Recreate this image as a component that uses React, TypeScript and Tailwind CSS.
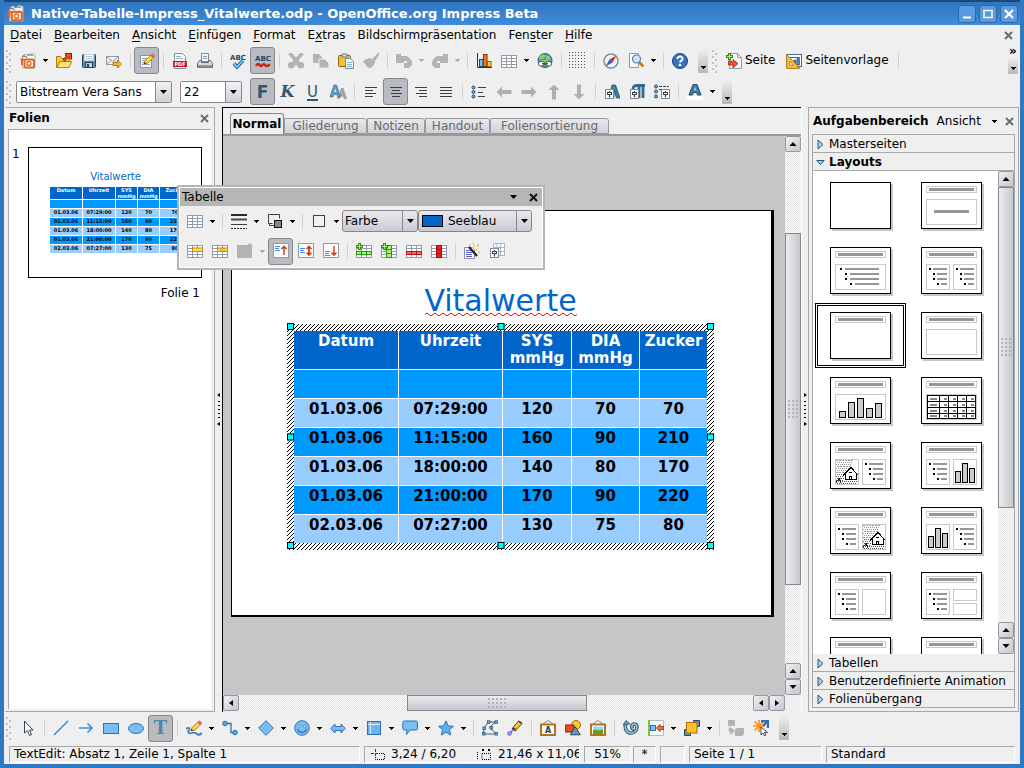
import React from "react";

type Kids = { children?: React.ReactNode };

/* ---------- small building blocks ---------- */

function Ico({ children, w = 16, h = 16 }: Kids & { w?: number; h?: number }) {
  return (
    <svg width={w} height={h} viewBox={`0 0 ${w} ${h}`} fill="none" className="shrink-0" aria-hidden="true">
      {children}
    </svg>
  );
}

function Tb({ label, on, children }: Kids & { label: string; on?: boolean }) {
  return (
    <button
      type="button"
      aria-label={label}
      title={label}
      aria-pressed={on ? true : undefined}
      className={
        on
          ? "flex h-[27px] w-[25px] shrink-0 items-center justify-center rounded-[3px] border border-[#85878d] bg-[#b9bbc1]"
          : "flex h-[27px] w-[25px] shrink-0 items-center justify-center"
      }
    >
      {children}
    </button>
  );
}

function Triangle({ off }: { off?: boolean }) {
  return (
    <svg width="5" height="3" viewBox="0 0 5 3" aria-hidden="true" shapeRendering="crispEdges">
      <path d="M0 0h5v1h-1v1h-1v1h-1v-1h-1v-1h-1z" fill={off ? "#aaa" : "#000"} />
    </svg>
  );
}

function ComboArrow() {
  return (
    <svg width="7" height="4" viewBox="0 0 7 4" aria-hidden="true">
      <path d="M0 0h7L3.500 4z" />
    </svg>
  );
}

function Drop({ label, off }: { label: string; off?: boolean }) {
  return (
    <button type="button" aria-label={label} className="flex h-[27px] w-[11px] shrink-0 items-center justify-center">
      <Triangle off={off} />
    </button>
  );
}

function Sep() {
  return (
    <span className="flex w-2 shrink-0 justify-center">
      <span className="h-[15px] w-px bg-[#cfcfcf]" />
    </span>
  );
}

function Grip() {
  return (
    <svg width="6" height="24" viewBox="0 0 6 24" className="shrink-0" aria-hidden="true" shapeRendering="crispEdges">
      {[0, 6, 12, 18].map((y) => (
        <g key={y} fill="#c2c2c2">
          <path d={`M0 ${y + 1}h2v2h-2zM3 ${y + 4}h2v2h-2z`} />
        </g>
      ))}
    </svg>
  );
}

function More() {
  return (
    <button
      type="button"
      aria-label="Weitere Symbole"
      className="flex h-6 w-[10px] shrink-0 items-end justify-center bg-linear-to-b from-[#efefef] to-[#b8b8b8] pb-1"
    >
      <Triangle />
    </button>
  );
}

function CloseX({ color = "#5f6f7f" }: { color?: string }) {
  return (
    <Ico w={9} h={9}>
      <path d="M1 1l7 7M8 1L1 8" stroke={color} strokeWidth="2" />
    </Ico>
  );
}

/* ---------- icons ---------- */

const Impress = ({ s = 16 }: { s?: number }) => (
  <svg width={s} height={s} viewBox="0 0 16 16" fill="none" className="shrink-0" aria-hidden="true">
    <path d="M2.500 3.500L5 1l3 1.500L11 .5l4 1v13.500H2.500z" fill="#f6f6f6" stroke="#b5b5b5" />
    <path d="M2 3.800c1.800-1.600 3.500-.6 5 .7M7.500 2.300c2-1.500 3.500 0 5.500.2" stroke="#7d7d7d" strokeWidth="1.300" />
    <path d="M.5 6.500h4M2 6v6" stroke="#e0672a" strokeWidth="2" />
    <rect x="4.500" y="6.500" width="9.500" height="8" rx="1.500" stroke="#e0672a" strokeWidth="2" />
    <circle cx="9" cy="10.500" r="2" fill="#fff" stroke="#e0672a" strokeWidth="1.300" />
  </svg>
);
const Open = () => (
  <Ico>
    <path d="M.5 14.500V3.500h4l1.500 2H13v9z" fill="#f6c73c" stroke="#b57a10" />
    <path d="M1 14.500l3-6h11.500l-2.500 6z" fill="#ffe27a" stroke="#b57a10" />
    <path d="M7.500 7.500l6-6M9 1.500h5.500v5" stroke="#8c1d04" strokeWidth="3" />
    <path d="M8 7l5-5M9.500 1.800h4.700v4.700" stroke="#f25a1d" strokeWidth="1.400" />
  </Ico>
);
const Save = () => (
  <Ico>
    <rect x="1.500" y="1.500" width="13" height="13" rx="1" fill="#5f91b8" stroke="#1d4463" />
    <rect x="3.500" y="1.500" width="9" height="6" fill="#f3f7fa" stroke="#c2d2de" />
    <path d="M5 3.500h6M5 5.500h6" stroke="#b6c3cd" />
    <rect x="4.500" y="9.500" width="7" height="5" fill="#c3d0da" stroke="#1d4463" />
    <rect x="6" y="11" width="2" height="3" fill="#1d4463" />
  </Ico>
);
const Mail = () => (
  <Ico>
    <rect x=".5" y="3.500" width="12" height="8" fill="#f1f4f8" stroke="#8f9aa6" />
    <path d="M1 4l5.500 4.500L12 4M1 11l4-3.500M12 11L8 7.500" stroke="#8f9aa6" />
    <path d="M7 9.500h4.500v-2.500l4 4-4 4v-2.500H7z" fill="#fbb829" stroke="#b06f08" strokeWidth=".9" />
  </Ico>
);
const Pencil = ({ x = 0, y = 0 }: { x?: number; y?: number }) => (
  <g transform={`translate(${x} ${y})`}>
    <path d="M0 10l1-3.500L7 1l2.500 2.300L4 9z" fill="#ffd940" stroke="#9c7410" strokeWidth=".8" />
    <path d="M6.500 1.500L8.500 0l2.300 2L9.500 3.700z" fill="#e8736c" stroke="#a6403b" strokeWidth=".6" />
    <path d="M0 10l.7-2 1.500 1.400z" fill="#222" />
  </g>
);
const Edit = () => (
  <Ico>
    <path d="M1.500 2.500h11v12h-11z" fill="#f7f9fc" stroke="#8493a5" />
    <path d="M3 5.500h6M3 7.500h5M3 9.500h3M3 11.500h8" stroke="#8fa6bd" />
    <Pencil x={5} y={1} />
  </Ico>
);
const Pdf = () => (
  <Ico>
    <path d="M2.500.5h8l3 3v12h-11z" fill="#f5f7fa" stroke="#7f8fa3" />
    <path d="M4 3.500h5M4 5.500h7" stroke="#9fb0c2" />
    <rect x="1" y="8" width="14" height="6" fill="#d6121c" />
    <text x="8" y="13" textAnchor="middle" fontSize="5" fontWeight="bold" fill="#fff" fontFamily="DejaVu Sans, sans-serif">
      PDF
    </text>
  </Ico>
);
const Print = () => (
  <Ico>
    <path d="M4.500.5h7v8h-7z" fill="#f8fafc" stroke="#7d8c9c" />
    <path d="M6 3.500h4M6 5.500h4" stroke="#8fa0b2" />
    <path d="M2.500 7.500h2v2h7v-2h2l2 3v4H.5v-4z" fill="#d5dae0" stroke="#5f6b77" />
    <path d="M1 12h14v2.500H1z" fill="#8a949e" />
    <path d="M12 12.500h2" stroke="#62d22f" />
  </Ico>
);
const Abc = () => (
  <text x="9" y="7" textAnchor="middle" fontSize="7" fontWeight="bold" fill="#24475f" fontFamily="DejaVu Sans, sans-serif">
    ABC
  </text>
);
const SpellCheck = () => (
  <Ico w={18} h={16}>
    <Abc />
    <path d="M5 10.500l3 3.500 6-6.500" stroke="#1d5f99" strokeWidth="3.500" />
    <path d="M5 10.500l3 3.500 6-6.500" stroke="#7fd0ff" strokeWidth="1.600" />
  </Ico>
);
const SpellAuto = () => (
  <Ico w={18} h={14}>
    <Abc />
    <path d="M2 12c2-4 3.500-1 4.500 0s2.500-3.500 4.500-1 3 .5 5-.5" stroke="#cf1f10" strokeWidth="2.400" />
  </Ico>
);
const Cut = () => (
  <Ico>
    <path d="M1.500 0l9 10M14.500 0l-9 10" stroke="#b3b3b3" strokeWidth="3.600" />
    <path d="M7 7h2l1.500 2h4l1.500 2v3l-2 1.500h-3L8 11.500 5 15.500H2L0 14v-3L1.500 9h4z" fill="#b3b3b3" />
  </Ico>
);
const Copy = () => (
  <Ico>
    <path d="M0 1h6l3 3v6H0z" fill="#b3b3b3" />
    <path d="M6 6h6l4 4v5H6z" fill="#b3b3b3" stroke="#eee" />
  </Ico>
);
const Paste = () => (
  <Ico>
    <rect x=".5" y="2.500" width="12" height="11" rx="1" fill="#eec03a" stroke="#8a6212" />
    <rect x="4" y="1" width="5" height="3" fill="#d9dde1" stroke="#667" strokeWidth=".8" />
    <path d="M7.500 5.500h5l3 3v7h-8z" fill="#f3f8fd" stroke="#6f8fae" />
    <path d="M9 9.500h5M9 11.500h5M9 13.500h5" stroke="#86b3de" />
  </Ico>
);
const Brush = () => (
  <Ico>
    <path d="M16 0v2l-4 6c0 4-3 7-6 7-2 0-2-2-4-4S0 8 0 8l6-3 3 1 6-6z" fill="#b3b3b3" />
  </Ico>
);
const Undo = () => (
  <Ico>
    <path d="M0 1h5v2h6l3 2.500 2 3V12l-3 3H8v-5h3V8H8v2H0z" fill="#b3b3b3" />
  </Ico>
);
const Redo = () => (
  <Ico>
    <path d="M16 1h-5v2H5L2 5.500 0 8.500V12l3 3h5v-5H5V8h3v2h8z" fill="#b3b3b3" />
  </Ico>
);
const Chart = () => (
  <Ico>
    <path d="M1.500 0v14.500H16" stroke="#333" />
    <rect x="3.500" y="6.500" width="3.500" height="7" fill="#7cc1f2" stroke="#204a74" />
    <rect x="7.500" y="1.500" width="3.500" height="12" fill="#f77a1c" stroke="#8a2c04" />
    <rect x="11.500" y="8.500" width="3.500" height="5" fill="#fbcf2c" stroke="#8a6a04" />
  </Ico>
);
const gridLines = "M0 2.500h16M0 5.500h16M0 8.500h16M0 11.500h16M0 14.500h16M.5 2v13M5.500 2v13M10.500 2v13M15.500 2v13";
const TableBase = ({ children }: Kids) => (
  <Ico>
    <rect x=".5" y="2.500" width="15" height="12" fill="#fff" />
    <path d={gridLines} stroke="#8e9dab" shapeRendering="crispEdges" />
    {children}
  </Ico>
);
const Globe = () => (
  <Ico>
    <circle cx="8" cy="7.500" r="7" fill="#4b95d6" stroke="#275a8c" />
    <path d="M2 4c2-3 5-3 6-2s-1 4-3 4-3 1-3-2zM9 3c2-1 4 0 5 3l-3 2-2-2zM4 7h7v3H5z" fill="#8fce5a" />
    <rect x="1.500" y="8.500" width="6" height="4.500" rx="2.200" fill="#fff" stroke="#4b5c35" />
    <rect x="8.500" y="8.500" width="6" height="4.500" rx="2.200" fill="#fff" stroke="#4b5c35" />
    <path d="M5 10.800h6" stroke="#4b5c35" strokeWidth="1.500" />
  </Ico>
);
const DotGrid = () => (
  <Ico w={17} h={17}>
    {[0, 1, 2, 3, 4, 5].map((r) => (
      <path key={r} d={`M0 ${r * 3 + 0.5}h17`} stroke="#555" strokeDasharray="1 2" shapeRendering="crispEdges" />
    ))}
  </Ico>
);
const Compass = () => (
  <Ico>
    <circle cx="8" cy="8" r="7" fill="#eef3f8" stroke="#7b8b9b" strokeWidth="1.400" />
    <path d="M13.500 2.500L9.500 9.500 6.500 6.500z" fill="#e0261c" />
    <path d="M2.500 13.500l4-7 3 3z" fill="#2763b8" />
  </Ico>
);
const Zoom = () => (
  <Ico>
    <path d="M1.500.5h9v14h-9z" fill="#f9fbfd" stroke="#8b9bab" />
    <path d="M11 9l4.500 4.500" stroke="#c17d12" strokeWidth="2.600" />
    <circle cx="8.500" cy="6" r="4" fill="#cfe6fa" stroke="#5a7ea3" strokeWidth="1.200" />
  </Ico>
);
const Help = () => (
  <Ico>
    <circle cx="8" cy="8" r="7.500" fill="#3a72c2" stroke="#173e7c" />
    <path d="M5.500 6c0-3.500 5.500-3.300 5 0-.2 1.500-2.400 1.500-2.400 3.500" stroke="#fff" strokeWidth="2" />
    <circle cx="8" cy="12" r="1.300" fill="#fff" />
  </Ico>
);
const NewPage = () => (
  <Ico>
    <path d="M3.500.5h8l4 4v11h-12z" fill="#f4f7fa" stroke="#8b9bab" />
    <path d="M11.500.5v4h4" stroke="#8b9bab" />
    <path d="M3.500 0v7M0 3.500h7" stroke="#2d8a14" strokeWidth="3" />
    <path d="M3.500 1v5M1 3.500h5" stroke="#b2f28a" />
    <path d="M2.500 8v4H7v3l5-4.500L7 6.500V9.500H5.500V8z" fill="#f4572a" stroke="#9c2806" strokeWidth=".8" />
  </Ico>
);
const PageLayout = () => (
  <Ico>
    <rect x="1.500" y="1.500" width="14" height="12" fill="#fff" stroke="#3e6ca0" />
    <path d="M3 4.500h11" stroke="#3e6ca0" />
    <path d="M8 7h2v5h-2zM11 5.500h2.500V12H11z" fill="#5b8fc8" stroke="#27496f" strokeWidth=".7" />
    <path d="M.7 1.500v13.800h13z" fill="#fcc643" stroke="#a66a08" />
    <path d="M3.700 8v4.300h4z" fill="#fff" stroke="#a66a08" strokeWidth=".8" />
  </Ico>
);
const Glyph = ({ children, cls }: { children: string; cls: string }) => <span className={cls}>{children}</span>;
const Shadowed = () => (
  <Ico w={18} h={16}>
    <path d="M8 15l4-11h2.500L18 15h-3l-1-2.500h-2.500l-1 2.500z" fill="#a3a3a3" />
    <path d="M1 13L5 1h2.500l4 12H8.700L8 10.500H4.700L4 13z" fill="#5b9bc9" stroke="#3a6e96" strokeWidth=".7" />
    <path d="M5.300 8h2L6.300 4.500z" fill="#efefef" />
  </Ico>
);
const lines: Record<string, string> = {
  left: "M2 3.500h12M2 6.500h8M2 9.500h11M2 12.500h8",
  center: "M2 3.500h12M4 6.500h8M3 9.500h11M4 12.500h8",
  right: "M2 3.500h12M6 6.500h8M3 9.500h11M6 12.500h8",
  justify: "M2 3.500h12M2 6.500h12M2 9.500h12M2 12.500h12",
};
const Align = ({ kind }: { kind: string }) => (
  <Ico>
    <path d={lines[kind]} stroke="#33404d" shapeRendering="crispEdges" />
  </Ico>
);
const Bullets = () => (
  <Ico w={15} h={14}>
    {[2.5, 7, 11.5].map((y) => (
      <circle key={y} cx="2.500" cy={y} r="1.500" fill="#6eaed8" stroke="#234d6d" />
    ))}
    <path d="M7 2.500h8M7 7.500h5M7 11.500h7" stroke="#33404d" shapeRendering="crispEdges" />
  </Ico>
);
const arrowTurn: Record<string, string> = { left: "rotate(0 8 8)", up: "rotate(90 8 8)", right: "rotate(180 8 8)", down: "rotate(270 8 8)" };
const GrayArrow = ({ to }: { to: string }) => (
  <Ico>
    <path d="M.5 8L6 2.500V6h9.500v4H6v3.500z" fill="#b0b0b0" transform={arrowTurn[to]} />
  </Ico>
);
const SlideBox = () => (
  <>
    <rect x="1.500" y="5.500" width="8" height="9" fill="#fff" stroke="#7c8a98" />
    <path d="M5.500 7v6.500" stroke="#33404d" strokeWidth="1.200" />
    <rect x="3.500" y="8.500" width="4" height="2" fill="#fff" stroke="#33404d" />
  </>
);
const CharStyle = () => (
  <Ico>
    <path d="M5 14l3-13h3.500L16 14h-3.500L10 6v8z" fill="#3f7ea6" stroke="#1d4a68" strokeWidth=".8" />
    <SlideBox />
  </Ico>
);
const ParaStyle = () => (
  <Ico>
    <path d="M4 5.500C4 1 7 1.500 9 1.500h7M10 2v12M14 2v12" stroke="#2f6a90" strokeWidth="2.800" />
    <SlideBox />
  </Ico>
);
const BulletStyle = () => (
  <Ico>
    {[2, 7, 12].map((y) => (
      <circle key={y} cx="2" cy={y + 0.5} r="1.500" fill="#6eaed8" stroke="#234d6d" />
    ))}
    <path d="M5 2.500h10M5 5.500h2" stroke="#33404d" strokeDasharray="3 1" />
    <g transform="translate(6 0)">
      <SlideBox />
    </g>
  </Ico>
);
const FontColor = () => (
  <Ico w={16} h={18}>
    <path d="M2 12L6 1.500h4L14 12h-3.500l-.8-2.500H6.300L5.500 12z" fill="#3f7ea6" stroke="#1d4a68" />
    <path d="M7.200 7.200h1.800L8.100 4z" fill="#efefef" />
    <rect x="0" y="13" width="16" height="4" fill="#fff" />
  </Ico>
);

/* drawing bar */
const Cursor = () => (
  <Ico>
    <path d="M4.500 1v12l3-2.500 2 5 2-1-2-4.500H13z" fill="#fff" stroke="#33404d" />
  </Ico>
);
const B = "#2f6fb5";
const L = "#79bdf5";
const LineI = () => (
  <Ico>
    <path d="M1 15L15 1" stroke="#3f8de0" strokeWidth="1.600" />
  </Ico>
);
const ArrowI = () => (
  <Ico>
    <path d="M1 8h13M9.500 3.500L14 8l-4.500 4.500" stroke="#3f8de0" strokeWidth="1.600" />
  </Ico>
);
const RectI = () => (
  <Ico>
    <rect x=".5" y="3.500" width="15" height="10" fill={L} stroke={B} />
  </Ico>
);
const EllipseI = () => (
  <Ico>
    <ellipse cx="8" cy="8.500" rx="7.500" ry="5" fill={L} stroke={B} />
  </Ico>
);
const Curve = () => (
  <Ico>
    <path d="M0 9c2-2 5-1 3 1s0 4 3 3 4 0 5 1 3 1 5-1" stroke="#3f7fc0" strokeWidth="1.800" />
    <Pencil x={5} y={1} />
  </Ico>
);
const Connector = () => (
  <Ico>
    <path d="M3 3.500h6v9h4" stroke={B} strokeWidth="1.300" />
    <circle cx="3" cy="3.500" r="2.300" fill="#5aa8ef" stroke={B} />
    <circle cx="13" cy="12.500" r="2.300" fill="#5aa8ef" stroke={B} />
  </Ico>
);
const Diamond = () => (
  <Ico>
    <path d="M8 .7L15.300 8 8 15.300.7 8z" fill={L} stroke={B} />
  </Ico>
);
const Smiley = () => (
  <Ico>
    <circle cx="8" cy="8" r="7.300" fill={L} stroke={B} />
    <circle cx="5.300" cy="6" r="1.200" fill="#fff" stroke={B} strokeWidth=".7" />
    <circle cx="10.700" cy="6" r="1.200" fill="#fff" stroke={B} strokeWidth=".7" />
    <path d="M3.500 9c1.500 4.500 7.500 4.500 9 0" stroke={B} strokeWidth="1.200" />
  </Ico>
);
const DoubleArrow = () => (
  <Ico>
    <path d="M.7 8.500L5 4v2.500h6V4l4.300 4.500L11 13v-2.500H5V13z" fill={L} stroke={B} />
  </Ico>
);
const Flow = () => (
  <Ico>
    <rect x="1.500" y="1.500" width="13" height="13" fill="#6fb3ef" stroke={B} />
    <path d="M4.500 2v12M2 4.500h12" stroke="#e6f3ff" />
  </Ico>
);
const Callout = () => (
  <Ico>
    <path d="M2.500 1h11.500q1.500 0 1.500 1.500v6q0 1.500-1.500 1.500H8l-3.500 4.500L5 10H2.500Q.8 10 .8 8.500v-6Q.8 1 2.500 1z" fill={L} stroke={B} />
  </Ico>
);
const Star = () => (
  <Ico>
    <path d="M8 .9l2.200 5 5.200.4-4 3.500 1.400 5.200L8 12.200 3.200 15l1.400-5.200-4-3.500 5.200-.4z" fill="#5fb0f2" stroke={B} />
  </Ico>
);
const Points = () => (
  <Ico>
    <path d="M1.500 14h13L7.500 7.500l6-5.500h-7L2 8z" stroke="#4a5966" />
    {[[0.5, 12.5], [13, 12.5], [5.500, 0.8], [13, 0.8], [1, 7], [8, 6.5]].map(([x, y]) => (
      <rect key={`${x}-${y}`} x={x} y={y} width="2.500" height="2.500" fill="#6fb3ef" stroke="#1e5a85" strokeWidth=".8" />
    ))}
  </Ico>
);
const Glue = () => (
  <Ico>
    <path d="M2.500 13.500L8 8" stroke="#5a5fc9" strokeWidth="1.300" />
    <path d="M6 7.500L11.500 1l3.500 2.500-5.500 6z" fill="#fbc22c" stroke="#4a3a10" strokeWidth=".9" />
    <path d="M5 8l4 3M11.500 1l3.500 2.500" stroke="#333" strokeWidth="1.500" />
    <circle cx="2.500" cy="13.500" r="1.700" fill="#b6b8ff" stroke="#4646c9" />
  </Ico>
);
const Frame = ({ children }: Kids) => (
  <Ico>
    <path d="M3 4l5-3.500L13 4" stroke="#8a8a8a" />
    <rect x="1" y="4.500" width="14" height="10.500" fill="#fff" stroke="#b87414" strokeWidth="2" />
    {children}
  </Ico>
);
const Shapes = () => (
  <Ico>
    <circle cx="11" cy="5" r="4.500" fill="#fbc530" stroke="#a66a08" />
    <rect x=".7" y="5" width="8" height="7" fill="#f0481f" stroke="#8c1d04" />
    <path d="M10 6.500l5.300 8.300H5.300z" fill="#6d93b4" stroke="#24475f" />
  </Ico>
);
const Rotate = () => (
  <Ico>
    <path d="M3 3C1 9 4 13 8 13s6-3 6-6-4-4-5-1 2 3 2 3" stroke="#2c5673" strokeWidth="3.600" />
    <path d="M3 3C1 9 4 13 8 13s6-3 6-6-4-4-5-1 2 3 2 3" stroke="#9cc3dc" strokeWidth="1.600" />
    <path d="M0 5l3-4.500L7 4z" fill="#6b9cbd" stroke="#2c5673" strokeWidth=".8" />
  </Ico>
);
const AlignObj = () => (
  <Ico>
    <path d="M1.500.5h14v15h-14z" fill="#f7f9fb" stroke="#b3bcc6" />
    <path d="M1 0v16" stroke="#5bb51c" strokeWidth="1.500" />
    <rect x="2.500" y="5.500" width="5" height="5" fill="#7cc1f2" stroke="#2f6fb5" />
    <path d="M8.500 8L12 4.500v2h4v3h-4v2z" fill="#f4732a" stroke="#8c2404" strokeWidth=".8" />
  </Ico>
);
const Arrange = () => (
  <Ico>
    <path d="M9.500.5h6v6h-6z" fill="#6d93b4" stroke="#24475f" />
    <path d="M.5 9.500h6v6h-6z" fill="#6d93b4" stroke="#24475f" />
    <rect x="2.500" y="2.500" width="10.500" height="10.500" fill="#fcc22c" stroke="#a66a08" />
  </Ico>
);
const Replace = () => (
  <Ico>
    <path d="M0 0h7v6H0zM7 10l1.500-2H16v6l-2 2H7z" fill="#b3b3b3" />
    <path d="M1.500 7.500v3.500h2M3 8.500l3 2.500-3 2.500z" stroke="#b3b3b3" strokeWidth="1.500" fill="#b3b3b3" />
  </Ico>
);
const Interact = () => (
  <Ico>
    <path d="M6 0v12M0 6h12M1.500 1.500l9 9M10.500 1.500l-9 9" stroke="#f7941d" strokeWidth="1.700" />
    <path d="M8 1h7v7M15 1L10 6" stroke="#2f6fb5" strokeWidth="2.400" />
    <path d="M8 7v8l2-2 1.500 3 1.500-1-1.500-2.500h3z" fill="#fff" stroke="#222" strokeWidth=".8" />
  </Ico>
);

/* table bar */
const LineStyle = () => (
  <Ico>
    <path d="M0 2h16" stroke="#232b33" strokeWidth="2" />
    <path d="M0 6.500h16" stroke="#3f4d5b" strokeWidth="2" />
    <path d="M0 11.500h16" stroke="#33404d" />
    <path d="M0 15.500h16" stroke="#222" strokeDasharray="2 1" />
  </Ico>
);
const LineColor = () => (
  <Ico>
    <path d="M5.500 10.500h-4v-9h11v4" stroke="#33404d" />
    <path d="M2.500 10.500v2h5" stroke="#33404d" />
    <rect x="7.500" y="7.500" width="7" height="7" fill="#888" stroke="#111" />
  </Ico>
);
const BorderBox = () => (
  <Ico>
    <rect x="2.500" y="2.500" width="11" height="11" fill="#f0f3f6" stroke="#33404d" />
  </Ico>
);
const MergeGray = () => (
  <Ico>
    <path d="M0 2h10l3-2 2 2v13H0z" fill="#b3b3b3" />
  </Ico>
);
const VAlign = ({ kind }: { kind: string }) => (
  <Ico>
    <rect x=".5" y=".5" width="15" height="14" fill="#fff" stroke="#8e9dab" />
    {kind === "top" && <path d="M2 3.500h5M2 5.500h4M2 7.500h5" stroke="#3f8de0" />}
    {kind === "mid" && <path d="M2 5.500h5M2 7.500h4M2 9.500h5" stroke="#3f8de0" />}
    {kind === "bot" && <path d="M2 8.500h5M2 10.500h4M2 12.500h5" stroke="#3f8de0" />}
    {kind !== "bot" && <path d="M11 12V3.500M8.500 6L11 3.200 13.500 6" stroke="#d93416" strokeWidth="1.400" />}
    {kind !== "top" && <path d="M11 3v9M8.500 9.500L11 12.300l2.500-2.800" stroke="#d93416" strokeWidth="1.400" />}
  </Ico>
);
const GreenPlus = () => (
  <>
    <path d="M3.500 0v7M0 3.500h7" stroke="#2f8f10" strokeWidth="3" />
    <path d="M3.500 1v5M1 3.500h5" stroke="#a8f07a" />
  </>
);
const Wizard = () => (
  <Ico>
    <path d="M.5 4.500h8l2 2v9H.5z" fill="#f7f7ff" stroke="#8e8eb5" />
    <path d="M2 7.500h6M2 9.500h6M2 11.500h6M2 13.500h6" stroke="#5b5bc9" />
    <path d="M5 4l8 9" stroke="#222" strokeWidth="2.200" />
    <path d="M5 1.500h1M9 .5h1M13 2.500h2M12 6.500h1M10 3.500h1M14.500 9.500h1" stroke="#e8a410" strokeWidth="1.700" />
  </Ico>
);
const TableProps = () => (
  <Ico>
    <path d="M4.500.5h11v12h-11zM4.500 4.500h11M4.500 8.500h11M8 .5v12M11.500.5v12" stroke="#a7b3bf" fill="#fff" />
    <SlideBox />
  </Ico>
);

/* ---------- scroll bars ---------- */

const arrowD: Record<string, string> = {
  up: "M4 1L7.500 5H.5z",
  down: "M4 5L.5 1h7z",
  left: "M2 3L6 0v6z",
  right: "M6 3L2 0v6z",
};
function ScrollBtn({ to }: { to: string }) {
  return (
    <button
      type="button"
      aria-label={`Bildlauf ${to}`}
      className="flex size-4 shrink-0 items-center justify-center rounded-[2px] border border-[#96989e] bg-linear-to-br from-[#f1f1f5] to-[#c4c6cd]"
    >
      <svg width="8" height="6" viewBox="0 0 8 6" aria-hidden="true">
        <path d={arrowD[to]} fill="#000" />
      </svg>
    </button>
  );
}
function ThumbDots({ vertical }: { vertical?: boolean }) {
  const w = vertical ? 10 : 18;
  const h = vertical ? 18 : 10;
  return (
    <svg width={w} height={h} viewBox={`0 0 ${w} ${h}`} aria-hidden="true" shapeRendering="crispEdges">
      {Array.from({ length: Math.ceil(h / 4) }, (_, i) => (
        <path key={i} d={`M0 ${i * 4 + 1}h${w}`} stroke="#b1b3b9" strokeWidth="2" strokeDasharray="2 2" />
      ))}
    </svg>
  );
}
const track = "bg-[conic-gradient(#e6e6e6_25%,#fafafa_0_50%,#e6e6e6_0_75%,#fafafa_0)] bg-[length:2px_2px]";

/* ---------- slide table ---------- */

const head = ["Datum", "Uhrzeit", "SYS mmHg", "DIA mmHg", "Zucker"];
const rows = [
  ["", "", "", "", ""],
  ["01.03.06", "07:29:00", "120", "70", "70"],
  ["01.03.06", "11:15:00", "160", "90", "210"],
  ["01.03.06", "18:00:00", "140", "80", "170"],
  ["01.03.06", "21:00:00", "170", "90", "220"],
  ["02.03.06", "07:27:00", "130", "75", "80"],
];

function SlideTable() {
  return (
    <table className="w-full table-fixed border-separate border-spacing-0 text-[15px] leading-[17px] font-bold">
      <colgroup>
        <col className="w-[105px]" />
        <col className="w-[104px]" />
        <col className="w-[69px]" />
        <col className="w-[68px]" />
        <col className="w-[67px]" />
      </colgroup>
      <thead>
        <tr className="h-[39px] bg-[#0066cc] text-white">
          {head.map((h) => (
            <th key={h} className="border-r border-b border-white p-0 pt-[2px] align-top last:border-r-0">
              {h}
            </th>
          ))}
        </tr>
      </thead>
      <tbody className="[&>tr:last-child]:h-7 [&>tr:last-child>td]:border-b-0">
        {rows.map((r, i) => (
          <tr key={i} className={i % 2 === 0 ? "h-[29px] bg-[#0099ff]" : "h-[29px] bg-[#99ccff]"}>
            {r.map((c, j) => (
              <td key={j} className="border-r border-b border-white p-0 pt-[2px] text-center align-top last:border-r-0">
                {c}
              </td>
            ))}
          </tr>
        ))}
      </tbody>
    </table>
  );
}

function MiniTable() {
  return (
    <table className="w-[141px] table-fixed border-separate border-spacing-0 text-[5px] leading-[6px] font-bold">
      <colgroup>
        <col className="w-[33px]" />
        <col className="w-[33px]" />
        <col className="w-[22px]" />
        <col className="w-[22px]" />
        <col />
      </colgroup>
      <thead>
        <tr className="h-[13px] bg-[#0066cc] text-white">
          {head.map((h) => (
            <th key={h} className="border-r border-b border-white p-0 align-top">
              {h}
            </th>
          ))}
        </tr>
      </thead>
      <tbody>
        {rows.map((r, i) => (
          <tr key={i} className={i % 2 === 0 ? "h-[9px] bg-[#0099ff]" : "h-[9px] bg-[#99ccff]"}>
            {r.map((c, j) => (
              <td key={j} className="overflow-hidden border-r border-b border-white p-0 text-center align-top">
                {c}
              </td>
            ))}
          </tr>
        ))}
      </tbody>
    </table>
  );
}

/* ---------- layout previews ---------- */

const Box = ({ x, y = 17, w, h = 26 }: { x: number; y?: number; w: number; h?: number }) => (
  <rect x={x + 0.5} y={y + 0.5} width={w - 1} height={h - 1} stroke="#c9c9c9" />
);
const List = ({ x, wide }: { x: number; wide?: boolean }) => {
  const step = wide ? 5 : 4;
  const end = wide ? 44 : 21;
  const first = wide ? 5 : 3;
  return (
    <g>
      {[0, 1, 1, 2].map((n, i) => {
        const dx = x + first + n * step;
        const y = 21 + i * 5;
        const bx = dx + (wide ? 5 : 4);
        return (
          <g key={i}>
            <rect x={dx} y={y} width="2" height="2" fill="#000" />
            <rect x={bx} y={y} width={x + end - bx} height="2" fill="#969696" />
          </g>
        );
      })}
    </g>
  );
};
const Bars = ({ x, w, gap, tops, base }: { x: number; w: number; gap: number; tops: number[]; base: number }) => (
  <g>
    {tops.map((t, i) => (
      <rect key={i} x={x + i * gap + 0.5} y={t + 0.5} width={w} height={base - t - 1} fill="#ccc" stroke="#000" />
    ))}
  </g>
);
const House = ({ x }: { x: number }) => (
  <g transform={`translate(${x} 17)`}>
    {Array.from({ length: 11 }, (_, i) => (
      <path
        key={i}
        d={`M${1 + (i % 2)} ${i * 2 + 1.5}h${Math.max(5, 17 - i)}`}
        stroke={i > 6 ? "#666" : "#999"}
        strokeDasharray={i % 3 ? "1 1" : "2 1"}
      />
    ))}
    <path d="M1 22.500h22M2 24.500h20" stroke="#555" strokeDasharray="1 1" />
    <path d="M9 15l7-6 6 6v6H9z" fill="#fff" />
    <path d="M8 16.500l8-8 7.500 8M10.500 15v5.500h11V15" stroke="#000" />
    <path d="M14.500 21v-4h2v4M14 13.500h3" stroke="#000" />
    <path d="M1 24l3-5 2 5" stroke="#222" />
  </g>
);
const Cells = () => (
  <g>
    <path d="M6.500 18.500h48v23h-48zM6 24.500h49M6 30.500h49M6 36.500h49M18.500 18v24M27.500 18v24M36.500 18v24M45.500 18v24" stroke="#000" />
    {[22, 28, 34, 39].map((y) => (
      <path key={y} d={`M9 ${y}h7M23 ${y}h3M32 ${y}h3M41 ${y}h3M50 ${y}h3`} stroke="#888" strokeWidth="2" />
    ))}
  </g>
);
const previews: { name: string; body: React.ReactNode }[] = [
  { name: "Leere Folie", body: null },
  {
    name: "Titelfolie",
    body: (
      <>
        <Box x={5} w={51} />
        <rect x="13" y="28" width="35" height="3" fill="#969696" />
      </>
    ),
  },
  { name: "Titel, Text", body: <><Box x={5} w={51} /><List x={5} wide /></> },
  { name: "Titel, zwei Texte", body: <><Box x={5} w={24} /><List x={5} /><Box x={32} w={24} /><List x={32} /></> },
  { name: "Nur Titel", body: null },
  { name: "Titel, Objekt", body: <Box x={5} w={51} /> },
  { name: "Titel, Diagramm", body: <><Box x={5} w={51} /><Bars x={9} w={6} gap={9} tops={[34, 25, 21, 31, 26]} base={41} /></> },
  { name: "Titel, Tabelle", body: <><Box x={5} w={51} /><Cells /></> },
  { name: "Titel, Clip, Text", body: <><House x={5} /><Box x={5} w={24} /><Box x={32} w={24} /><List x={32} /></> },
  { name: "Titel, Text, Diagramm", body: <><Box x={5} w={24} /><List x={5} /><Box x={32} w={24} /><Bars x={34} w={5} gap={7} tops={[29, 21, 26]} base={41} /></> },
  { name: "Titel, Text, Clip", body: <><Box x={5} w={24} /><List x={5} /><House x={32} /><Box x={32} w={24} /></> },
  { name: "Titel, Diagramm, Text", body: <><Box x={5} w={24} /><Bars x={7} w={5} gap={7} tops={[29, 21, 26]} base={41} /><Box x={32} w={24} /><List x={32} /></> },
  { name: "Titel, Text, Objekt", body: <><Box x={5} w={24} /><List x={5} /><Box x={32} w={24} /></> },
  { name: "Titel, Text, zwei Objekte", body: <><Box x={5} w={24} /><List x={5} /><Box x={32} w={24} h={12} /><Box x={32} y={31} w={24} h={12} /></> },
  { name: "Titel, zwei Objekte", body: null },
  { name: "Titel, vier Objekte", body: null },
];

function Preview({ index }: { index: number }) {
  const p = previews[index];
  const selected = index === 4;
  return (
    <button
      type="button"
      aria-label={p.name}
      className={
        selected
          ? "flex h-[65px] w-[91px] items-center justify-center border-3 border-double border-black"
          : "flex h-[65px] w-[91px] items-center justify-center"
      }
    >
      <svg width="61" height="47" viewBox="0 0 61 47" fill="none" className="overflow-visible" shapeRendering="crispEdges" aria-hidden="true">
        <rect x="2" y="2" width="61" height="47" fill="#c6c6c6" />
        <rect x=".5" y=".5" width="60" height="46" fill="#fff" stroke="#000" />
        {index > 0 && (
          <>
            <Box x={5} y={4} w={51} h={7} />
            <rect x="8" y="6" width="45" height="3" fill="#969696" />
          </>
        )}
        {p.body}
      </svg>
    </button>
  );
}

function Section({ open, children }: { open?: boolean; children: string }) {
  return (
    <button
      type="button"
      aria-expanded={!!open}
      className={
        open
          ? "flex h-[18px] w-full shrink-0 items-center gap-1 border-b border-[#a8a8a8] bg-[#efefef] pt-px pl-[3px] font-bold"
          : "flex h-[18px] w-full shrink-0 items-center gap-1 border-b border-[#a8a8a8] bg-[#efefef] pt-px pl-[3px]"
      }
    >
      <Ico w={9} h={9}>
        <path d={open ? "M.8 2.500h7.400L4.500 6.500z" : "M2 0l5 4.500L2 9z"} fill="#a5d0f0" stroke="#2b5575" />
      </Ico>
      {children}
    </button>
  );
}

/* ---------- window parts ---------- */

const menu: [string, string, string][] = [
  ["", "D", "atei"],
  ["", "B", "earbeiten"],
  ["", "A", "nsicht"],
  ["", "E", "infügen"],
  ["", "F", "ormat"],
  ["E", "x", "tras"],
  ["Bildschirm", "p", "räsentation"],
  ["Fen", "s", "ter"],
  ["", "H", "ilfe"],
];

function WinBtn({ label, children }: Kids & { label: string }) {
  return (
    <button type="button" aria-label={label} className="flex size-[18px] items-center justify-center rounded-[3px] border border-[#2a66a8] bg-[#5b9ade]">
      <Ico w={12} h={12}>{children}</Ico>
    </button>
  );
}

function ComboInput({ label, value, cls }: { label: string; value: string; cls: string }) {
  return (
    <div className={cls}>
      <input aria-label={label} defaultValue={value} className="h-full min-w-0 flex-1 bg-white pl-[3px] text-[12px] outline-none" />
      <button
        type="button"
        aria-label={`${label} auswählen`}
        className="flex h-full w-4 items-center justify-center border-l border-[#85878d] bg-linear-to-b from-[#f2f2f5] to-[#cfd1d7]"
      >
        <ComboArrow />
      </button>
    </div>
  );
}

function StatusCell({ cls, children }: Kids & { cls: string }) {
  return (
    <div className={`flex h-[17px] items-center overflow-hidden border border-t-[#a8a8a8] border-r-white border-b-white border-l-[#a8a8a8] pt-px whitespace-nowrap ${cls}`}>
      {children}
    </div>
  );
}

function Handle({ cls }: { cls: string }) {
  return <span className={`absolute size-[7px] border border-black bg-[#00ffff] ${cls}`} />;
}

function TableBar() {
  return (
    <div className="absolute top-[185px] left-[173px] w-[368px] border-2 border-[#b4b4b4] bg-[#efefef] p-px pb-[2px] shadow-[inset_0_0_0_1px_#fff]">
      <div className="flex h-[18px] items-center bg-[#b6b6b6] pr-1 pl-[2px]">
        <span className="flex-1">Tabelle</span>
        <button type="button" aria-label="Menü" className="mr-3"><ComboArrow /></button>
        <button type="button" aria-label="Schließen"><CloseX color="#111" /></button>
      </div>
      <div className="flex h-[30px] items-center pl-[2px]">
        <Tb label="Tabelle"><TableBase /></Tb><Drop label="Tabelle" /><Sep />
        <Tb label="Linienstil"><LineStyle /></Tb><Drop label="Linienstil" />
        <Tb label="Rahmenfarbe"><LineColor /></Tb><Drop label="Rahmenfarbe" /><Sep />
        <Tb label="Umrandung"><BorderBox /></Tb><Drop label="Umrandung" />
        <label className="flex h-[22px] w-[76px] items-center rounded-[3px] border border-[#85878d] bg-linear-to-b from-[#e9e9ee] to-[#c9cbd2]">
          <select aria-label="Füllart" className="h-full min-w-0 flex-1 appearance-none bg-transparent pl-[2px] outline-none">
            <option>Farbe</option>
          </select>
          <span className="flex h-full w-[15px] items-center justify-center border-l border-[#85878d]"><ComboArrow /></span>
        </label>
        <label className="flex h-[22px] w-[114px] items-center rounded-[3px] border border-[#85878d] bg-linear-to-b from-[#e9e9ee] to-[#c9cbd2] pl-[3px]">
          <span className="h-3 w-[21px] border border-black bg-[#0066cc]" />
          <select aria-label="Füllfarbe" className="h-full min-w-0 flex-1 appearance-none bg-transparent pl-[5px] outline-none">
            <option>Seeblau</option>
          </select>
          <span className="flex h-full w-[15px] items-center justify-center border-l border-[#85878d]"><ComboArrow /></span>
        </label>
      </div>
      <div className="flex h-[30px] items-center pl-[2px]">
        <Tb label="Zellen verbinden"><TableBase><rect x="5.500" y="5" width="10" height="3.500" fill="#ffe14a" stroke="#d98208" /></TableBase></Tb>
        <Tb label="Zellen teilen"><TableBase><path d="M5.500 5h10v3.500h-10zM9 5v3.500M12 5v3.500" fill="#ffe14a" stroke="#d98208" /></TableBase></Tb>
        <Tb label="Optimieren"><MergeGray /></Tb><Drop label="Optimieren" off />
        <Tb label="Oben" on><VAlign kind="top" /></Tb>
        <Tb label="Zentrieren (vertikal)"><VAlign kind="mid" /></Tb>
        <Tb label="Unten"><VAlign kind="bot" /></Tb><Sep />
        <Tb label="Zeile einfügen"><TableBase><path d="M.5 8.500h15v3H.5zM5.500 8v4M10.500 8v4" fill="#a8f07a" stroke="#1f9a0c" /><GreenPlus /></TableBase></Tb>
        <Tb label="Spalte einfügen"><TableBase><path d="M5.500 2.500h5v12h-5zM5 6.500h6M5 10.500h6" fill="#a8f07a" stroke="#1f9a0c" /><GreenPlus /></TableBase></Tb>
        <Tb label="Zeile löschen"><TableBase><path d="M.5 8.500h15v3H.5zM5.500 8v4M10.500 8v4" fill="#f26a6a" stroke="#b80f0f" /></TableBase></Tb>
        <Tb label="Spalte löschen"><TableBase><path d="M5.500 2.500h5v12h-5zM5 6.500h6M5 10.500h6" fill="#e32222" stroke="#a80808" /></TableBase></Tb><Sep />
        <Tb label="AutoFormat"><Wizard /></Tb>
        <Tb label="Tabelleneigenschaften"><TableProps /></Tb>
      </div>
    </div>
  );
}

const drawTools: [string, React.ReactNode][] = [
  ["Kurve", <Curve />],
  ["Verbinder", <Connector />],
  ["Standardformen", <Diamond />],
  ["Symbolformen", <Smiley />],
  ["Blockpfeile", <DoubleArrow />],
  ["Flussdiagramme", <Flow />],
  ["Legenden", <Callout />],
  ["Sterne", <Star />],
];

export default function App() {
  return (
    <div className="relative flex h-screen w-full flex-col overflow-hidden border-x-4 border-b-4 border-[#2f79c4] bg-[#efefef] font-['DejaVu_Sans',sans-serif] text-[12px] leading-[15px] text-black">
      {/* title bar */}
      <header className="-mx-1 flex h-[25px] shrink-0 items-center border-t-2 border-[#1c4878] bg-linear-to-b from-[#2f74bd] to-[#3f8cdb] pr-[6px] pl-[7px] text-white">
        <Impress s={17} />
        <h1 className="ml-[7px] flex-1 truncate text-[13px] font-bold">Native-Tabelle-Impress_Vitalwerte.odp - OpenOffice.org Impress Beta</h1>
        <div className="flex gap-[3px]">
          <WinBtn label="Minimieren"><path d="M2 9.500h8" stroke="#fff" strokeWidth="2" /></WinBtn>
          <WinBtn label="Maximieren"><rect x="2" y="2.500" width="8" height="7" stroke="#fff" strokeWidth="1.500" /></WinBtn>
          <WinBtn label="Schließen"><path d="M2 2l8 8M10 2l-8 8" stroke="#fff" strokeWidth="2.200" /></WinBtn>
        </div>
      </header>

      {/* menu bar */}
      <nav className="flex h-5 shrink-0 items-center gap-3 pr-[7px] pl-[6px]">
        {menu.map(([a, k, b]) => (
          <button type="button" key={a + k + b}>
            {a}
            <u className="underline-offset-2">{k}</u>
            {b}
          </button>
        ))}
        <button type="button" aria-label="Dokument schließen" className="ml-auto"><CloseX /></button>
      </nav>

      {/* standard bar */}
      <div className="flex h-[31px] shrink-0 items-center px-[2px]">
        <Grip />
        <span className="w-[3px]" />
        <Tb label="Neu"><Impress /></Tb><Drop label="Neu" />
        <Tb label="Öffnen"><Open /></Tb>
        <Tb label="Speichern"><Save /></Tb>
        <Tb label="E-Mail"><Mail /></Tb><Sep />
        <Tb label="Bearbeiten" on><Edit /></Tb><Sep />
        <Tb label="PDF-Export"><Pdf /></Tb>
        <Tb label="Drucken"><Print /></Tb><Sep />
        <Tb label="Rechtschreibung"><SpellCheck /></Tb>
        <Tb label="Automatische Rechtschreibprüfung" on><SpellAuto /></Tb><Sep />
        <Tb label="Ausschneiden"><Cut /></Tb>
        <Tb label="Kopieren"><Copy /></Tb>
        <Tb label="Einfügen"><Paste /></Tb>
        <Tb label="Format übertragen"><Brush /></Tb><Sep />
        <Tb label="Rückgängig"><Undo /></Tb><Drop label="Rückgängig" off />
        <Tb label="Wiederherstellen"><Redo /></Tb><Drop label="Wiederherstellen" off /><Sep />
        <Tb label="Diagramm"><Chart /></Tb>
        <Tb label="Tabelle"><TableBase /></Tb><Drop label="Tabelle" />
        <Tb label="Hyperlink"><Globe /></Tb><Sep />
        <Tb label="Raster"><DotGrid /></Tb><Sep />
        <Tb label="Navigator"><Compass /></Tb>
        <Tb label="Maßstab"><Zoom /></Tb><Drop label="Maßstab" /><Sep />
        <Tb label="Hilfe"><Help /></Tb>
        <span className="w-[6px]" />
        <More />
        <span className="w-1" />
        <Grip />
        <span className="w-2" />
        <button type="button" className="mr-[11px] flex items-center gap-[3px]"><NewPage />Seite</button>
        <button type="button" className="mr-[6px] flex items-center gap-[3px]"><PageLayout />Seitenvorlage</button>
        <Sep />
        <div className="ml-auto flex flex-col items-center gap-[2px]">
          <span className="h-2 text-[12px] leading-[8px] font-bold">»</span>
          <button type="button" aria-label="Weitere" className="flex h-[17px] w-[10px] items-end justify-center bg-linear-to-b from-[#efefef] to-[#b8b8b8] pb-1"><Triangle /></button>
        </div>
      </div>

      {/* format bar */}
      <div className="flex h-[31px] shrink-0 items-center pl-[2px]">
        <Grip />
        <ComboInput label="Schriftart" value="Bitstream Vera Sans" cls="ml-1 flex h-[22px] w-[156px] items-center overflow-hidden rounded-[2px] border border-[#85878d]" />
        <ComboInput label="Schriftgröße" value="22" cls="mr-2 ml-2 flex h-[22px] w-[62px] items-center overflow-hidden rounded-[2px] border border-[#85878d]" />
        <Tb label="Fett" on><Glyph cls="text-[17px] leading-5 font-bold text-[#34566f]">F</Glyph></Tb>
        <Tb label="Kursiv"><Glyph cls="font-['DejaVu_Serif',serif] text-[16px] leading-5 font-bold text-[#34566f] italic">K</Glyph></Tb>
        <Tb label="Unterstrichen"><Glyph cls="text-[15px] leading-5 text-[#34566f] underline decoration-2 underline-offset-2">U</Glyph></Tb>
        <Tb label="Schatten"><Shadowed /></Tb><Sep />
        <Tb label="Linksbündig"><Align kind="left" /></Tb>
        <Tb label="Zentriert" on><Align kind="center" /></Tb>
        <Tb label="Rechtsbündig"><Align kind="right" /></Tb>
        <Tb label="Blocksatz"><Align kind="justify" /></Tb><Sep />
        <Tb label="Aufzählung"><Bullets /></Tb>
        <Tb label="Höherstufen"><GrayArrow to="left" /></Tb>
        <Tb label="Herabstufen"><GrayArrow to="right" /></Tb>
        <Tb label="Nach oben"><GrayArrow to="up" /></Tb>
        <Tb label="Nach unten"><GrayArrow to="down" /></Tb><Sep />
        <Tb label="Zeichen"><CharStyle /></Tb>
        <Tb label="Absatz"><ParaStyle /></Tb>
        <Tb label="Nummerierung"><BulletStyle /></Tb><Sep />
        <Tb label="Schriftfarbe"><FontColor /></Tb><Drop label="Schriftfarbe" />
        <span className="w-1" />
        <More />
      </div>

      {/* work area */}
      <main className="flex min-h-0 flex-1 px-px">
        <aside className="flex w-[210px] shrink-0 flex-col border-y border-r border-[#a8a8a8] pr-[3px] pb-[2px] pl-[3px]">
          <div className="flex h-[21px] shrink-0 items-center justify-between pr-[2px] pl-px">
            <h2 className="font-bold">Folien</h2>
            <button type="button" aria-label="Folien schließen"><CloseX /></button>
          </div>
          <div className="flex min-h-0 flex-1 border-t border-l border-[#a8a8a8] bg-white pt-[17px] pl-[3px]">
            <span className="w-4 shrink-0 text-[12px]">1</span>
            <div>
              <div className="h-[131px] w-[174px] overflow-hidden border border-black bg-white pl-[21px]">
                <p className="mt-[22px] mb-[3px] w-[131px] text-center text-[10px] leading-[14px] text-[#0066cc]">Vitalwerte</p>
                <MiniTable />
              </div>
              <p className="mt-2 pr-[2px] text-right">Folie 1</p>
            </div>
          </div>
        </aside>
        <div className="flex w-[7px] shrink-0 items-center justify-center">
          <svg width="3" height="33" viewBox="0 0 3 33" aria-hidden="true"><path d="M3 0v4L0 2zM3 29v4l-3-2zM1 8h2v1H1zM1 12h2v1H1zM1 16h2v1H1zM1 20h2v1H1zM1 24h2v1H1z" /></svg>
        </div>

        <section className="flex min-w-0 flex-1 flex-col border-t border-l border-black">
          <div role="tablist" className="flex h-7 shrink-0 items-end border-b-2 border-[#999] pl-[7px]">
            <button type="button" role="tab" aria-selected="true" className="h-[21px] w-[54px] rounded-t-[3px] border border-b-0 border-[#85878d] text-center leading-[19px] font-bold">Normal</button>
            {[
              ["Gliederung", "w-[83px]"],
              ["Notizen", "w-[58px]"],
              ["Handout", "w-[65px]"],
              ["Foliensortierung", "w-[119px]"],
            ].map(([t, w]) => (
              <button type="button" role="tab" aria-selected="false" key={t} className={`h-4 rounded-tr-[3px] border border-[#96989e] bg-linear-to-b from-[#e9e9ed] to-[#d0d2d8] text-center leading-[14px] text-[#6a6a6a] ${w}`}>
                {t}
              </button>
            ))}
          </div>
          <div className="flex min-h-0 flex-1">
            <div className="min-w-0 flex-1 overflow-hidden bg-[#c6c6c6] pt-[74px] pl-2">
              <div className="h-[407px] w-[543px] border border-r-3 border-b-2 border-black bg-white pl-[55px]">
                <div className="w-[427px]">
                  <div className="flex h-[113px] flex-col items-center pt-[72px]">
                    <h3 className="text-[30px] leading-[35px] text-[#0066cc]">Vitalwerte</h3>
                    <svg width="152" height="4" viewBox="0 0 152 4" fill="none" className="-mt-[6px] shrink-0" aria-hidden="true">
                      <path d={"M0 2.500" + Array.from({ length: 19 }, () => "q2 -3 4 0t4 0").join("")} stroke="#f00" />
                    </svg>
                  </div>
                  <div className="relative bg-[linear-gradient(135deg,#fff_42%,#000_42%_58%,#fff_58%)] bg-[length:4px_4px] p-[7px]">
                    <SlideTable />
                    <Handle cls="-top-px left-0" />
                    <Handle cls="-top-px left-1/2 -translate-x-1/2" />
                    <Handle cls="-top-px right-0" />
                    <Handle cls="top-1/2 left-0 -translate-y-1/2" />
                    <Handle cls="top-1/2 right-0 -translate-y-1/2" />
                    <Handle cls="bottom-px left-0" />
                    <Handle cls="bottom-px left-1/2 -translate-x-1/2" />
                    <Handle cls="right-0 bottom-px" />
                  </div>
                </div>
              </div>
            </div>
            <div className={`flex w-4 shrink-0 flex-col ${track}`}>
              <ScrollBtn to="up" />
              <div className="flex-[81]" />
              <div className="flex flex-[352] items-center justify-center border border-[#85878d] bg-linear-to-r from-[#ececf0] to-[#c6c8cf]"><ThumbDots vertical /></div>
              <div className="flex-[78]" />
              <ScrollBtn to="up" />
              <ScrollBtn to="down" />
            </div>
          </div>
          <div className="flex shrink-0">
            <div className={`flex h-4 flex-1 ${track}`}>
              <ScrollBtn to="left" />
              <div className="flex-[169]" />
              <div className="flex flex-[178] items-center justify-center border border-[#85878d] bg-linear-to-b from-[#ececf0] to-[#c6c8cf]"><ThumbDots /></div>
              <div className="flex-[167]" />
              <ScrollBtn to="left" />
              <ScrollBtn to="right" />
            </div>
            <div className="w-4" />
          </div>
          <div className="h-px bg-[#efefef]" />
        </section>

        <div className="flex w-[7px] shrink-0 items-center justify-center border-l border-white">
          <svg width="3" height="33" viewBox="0 0 3 33" aria-hidden="true"><path d="M0 0v4l3-2zM0 29v4l3-2zM0 8h2v1H0zM0 12h2v1H0zM0 16h2v1H0zM0 20h2v1H0zM0 24h2v1H0z" /></svg>
        </div>

        <aside className="flex w-[211px] shrink-0 flex-col border border-[#a8a8a8] px-[3px] pb-[3px]">
          <div className="flex h-[26px] shrink-0 items-center pr-px pl-px">
            <h2 className="font-bold">Aufgabenbereich</h2>
            <button type="button" className="ml-2 flex flex-1 items-center justify-between pr-2">Ansicht <Triangle /></button>
            <button type="button" aria-label="Aufgabenbereich schließen"><CloseX /></button>
          </div>
          <div className="flex min-h-0 flex-1 flex-col border border-b-0 border-[#a8a8a8]">
            <Section>Masterseiten</Section>
            <Section open>Layouts</Section>
            <div className="flex min-h-0 flex-1 bg-white">
              <div className="grid min-w-0 flex-1 auto-rows-[65px] grid-cols-[91px_91px] overflow-hidden pt-[2px] pl-[2px]">
                {previews.map((p, i) => (
                  <Preview key={p.name} index={i} />
                ))}
              </div>
              <div className={`flex w-4 shrink-0 flex-col ${track}`}>
                <ScrollBtn to="up" />
                <div className="flex flex-[320] items-center justify-center border border-[#85878d] bg-linear-to-r from-[#ececf0] to-[#c6c8cf]"><ThumbDots vertical /></div>
                <div className="flex-[115]" />
                <ScrollBtn to="up" />
                <ScrollBtn to="down" />
              </div>
            </div>
            <Section>Tabellen</Section>
            <Section>Benutzerdefinierte Animation</Section>
            <Section>Folienübergang</Section>
          </div>
        </aside>
      </main>

      {/* drawing bar */}
      <div className="flex h-8 shrink-0 items-center pl-[2px]">
        <Grip />
        <span className="w-[3px]" />
        <Tb label="Auswahl"><Cursor /></Tb><Sep />
        <Tb label="Linie"><LineI /></Tb>
        <Tb label="Pfeil"><ArrowI /></Tb>
        <Tb label="Rechteck"><RectI /></Tb>
        <Tb label="Ellipse"><EllipseI /></Tb>
        <Tb label="Text" on><Glyph cls="font-['DejaVu_Serif',serif] text-[18px] leading-5 font-bold text-[#4f86ab]">T</Glyph></Tb><Sep />
        {drawTools.map(([t, icon]) => (
          <React.Fragment key={t}>
            <Tb label={t}>{icon}</Tb>
            <Drop label={t} />
          </React.Fragment>
        ))}
        <Sep />
        <Tb label="Punkte"><Points /></Tb>
        <Tb label="Klebepunkte"><Glue /></Tb><Sep />
        <Tb label="Fontwork">
          <Frame><text x="8" y="13" textAnchor="middle" fontSize="8" fontWeight="bold" fill="#24475f" fontFamily="DejaVu Sans, sans-serif">A</text></Frame>
        </Tb>
        <Tb label="Gallery"><Shapes /></Tb>
        <Tb label="Bild">
          <Frame><rect x="3" y="6.500" width="10" height="4" fill="#9fd0f5" /><path d="M3 14v-3.500c3-2 5 1 10-1V14z" fill="#4fa52a" /></Frame>
        </Tb><Sep />
        <Tb label="Drehen"><Rotate /></Tb>
        <Tb label="Ausrichtung"><AlignObj /></Tb><Drop label="Ausrichtung" />
        <Tb label="Anordnung"><Arrange /></Tb><Drop label="Anordnung" /><Sep />
        <Tb label="Ersetzen"><Replace /></Tb>
        <Tb label="Interaktion"><Interact /></Tb>
        <span className="w-[6px]" />
        <More />
      </div>

      {/* status bar */}
      <footer className="flex h-5 shrink-0 items-center px-[5px]">
        <StatusCell cls="mr-1 w-[351px] pl-1">TextEdit: Absatz 1, Zeile 1, Spalte 1</StatusCell>
        <StatusCell cls="mr-1 w-[216px] pl-[6px]">
          <Ico w={14} h={12}>
            <path d="M0 4.500h8M4.500 0v8" stroke="#2323d9" strokeDasharray="3 1" />
            <path d="M8 4.500h5.500v6h-9V8" stroke="#000" strokeDasharray="1 1" />
          </Ico>
          <span className="ml-[6px] w-[85px] shrink-0">3,24 / 6,20</span>
          <Ico w={16} h={12}>
            <path d="M1.500 3v8M6 4.500h8.500v6H6z" stroke="#000" strokeDasharray="1 1" />
            <path d="M6 0l2 2M8 0L6 2M12 0l2 2M14 0l-2 2" stroke="#000" />
          </Ico>
          <span className="ml-[6px]">21,46 x 11,06</span>
        </StatusCell>
        <StatusCell cls="mr-[2px] w-[47px] justify-center">51%</StatusCell>
        <StatusCell cls="mr-1 w-[23px] justify-center">*</StatusCell>
        <StatusCell cls="mr-1 w-[25px]" />
        <StatusCell cls="mr-1 w-[133px] pl-1">Seite 1 / 1</StatusCell>
        <StatusCell cls="min-w-0 flex-1 pl-1">Standard</StatusCell>
      </footer>

      <TableBar />
    </div>
  );
}
